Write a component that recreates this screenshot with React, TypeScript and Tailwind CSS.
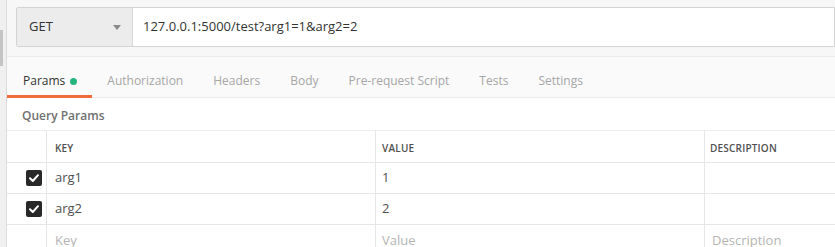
const tabs = [
  "Authorization",
  "Headers",
  "Body",
  "Pre-request Script",
  "Tests",
  "Settings",
];

const rows = [
  { key: "arg1", value: "1" },
  { key: "arg2", value: "2" },
];

const Check = () => (
  <span className="w-[16px] h-[16px] rounded-[2px] bg-[#282828] flex items-center justify-center">
    <svg width="12" height="12" viewBox="0 0 12 12">
      <path
        d="M2 6.3 L4.8 9 L10 3.2"
        fill="none"
        stroke="#fff"
        strokeWidth="2"
        strokeLinecap="round"
        strokeLinejoin="round"
      />
    </svg>
  </span>
);

const App = () => {
  return (
    <div
      className="w-[835px] h-[247px] overflow-hidden flex bg-[#f0f0f0] text-[#505050]"
      style={{ fontFamily: '"Open Sans", sans-serif' }}
    >
      <div className="w-[7px] shrink-0 flex flex-col pt-[30px] border-r border-[#dcdcdc]">
        <div className="w-[3px] h-[36px] bg-[#c4c4c4]" />
      </div>
      <div className="flex-1 flex flex-col bg-[#fafafa]">
        <div className="shrink-0 pl-[9px] pt-[7px] pb-[9px] bg-[#f7f7f7]">
          <div className="flex h-[40px] border border-[#d4d4d4] rounded-l-[2px]">
            <div className="w-[116px] bg-[#ececec] flex items-center justify-between pl-[12px] pr-[11px] border-r border-[#d8d8d8]">
              <span className="text-[13px] text-[#333]">GET</span>
              <svg width="8" height="5" viewBox="0 0 8 5">
                <path d="M0 0 H8 L4 5 Z" fill="#8a8a8a" />
              </svg>
            </div>
            <div className="flex-1 bg-white flex items-center pl-[10px] text-[13px] text-[#333]">
              127.0.0.1:5000/test?arg1=1&amp;arg2=2
            </div>
          </div>
        </div>
        <div className="shrink-0 flex h-[42px] border-t border-b border-[#ececec] items-stretch">
          <div className="relative flex items-center pt-[8px] pl-[16px] pr-[15px] text-[12px] text-[#333]">
            Params
            <span className="ml-[5px] mt-[1px] w-[7px] h-[7px] rounded-full bg-[#26b47f]" />
            <span className="absolute left-0 right-0 bottom-[-1px] h-[3px] bg-[#f26b3a]" />
          </div>
          {tabs.map((t) => (
            <div
              key={t}
              className="flex items-center pt-[8px] px-[15px] text-[12px] text-[#a6a6a6]"
            >
              {t}
            </div>
          ))}
        </div>
        <div className="shrink-0 bg-[#fff] flex-1">
          <div className="h-[32px] flex items-center pt-[4px] pl-[15px] text-[12px] font-semibold text-[#707070]">
            Query Params
          </div>
          <div className="border-t border-[#ececec]">
            <div className="flex h-[32px] border-b border-[#e6e6e6] text-[10px] font-semibold text-[#505050] tracking-[0.2px]">
              <div className="w-[40px] border-r border-[#e6e6e6]" />
              <div className="w-[329px] flex items-center pt-[3px] pl-[8px] border-r border-[#e6e6e6]">
                KEY
              </div>
              <div className="w-[329px] flex items-center pt-[3px] pl-[6px] border-r border-[#e6e6e6]">
                VALUE
              </div>
              <div className="flex-1 flex items-center pt-[3px] pl-[5px]">DESCRIPTION</div>
            </div>
            {rows.map((r) => (
              <div
                key={r.key}
                className="flex h-[31px] border-b border-[#e6e6e6] text-[13px] text-[#505050]"
              >
                <div className="w-[40px] flex items-center justify-end pr-[4px] border-r border-[#e6e6e6]">
                  <Check />
                </div>
                <div className="w-[329px] flex items-center pl-[8px] border-r border-[#e6e6e6]">
                  {r.key}
                </div>
                <div className="w-[329px] flex items-center pl-[6px] border-r border-[#e6e6e6]">
                  {r.value}
                </div>
                <div className="flex-1" />
              </div>
            ))}
            <div className="flex h-[31px] text-[13px] text-[#b4b4b4]">
              <div className="w-[40px] border-r border-[#e6e6e6]" />
              <div className="w-[329px] flex items-center pl-[8px] border-r border-[#e6e6e6]">
                Key
              </div>
              <div className="w-[329px] flex items-center pl-[6px] border-r border-[#e6e6e6]">
                Value
              </div>
              <div className="flex-1 flex items-center pl-[7px]">Description</div>
            </div>
          </div>
        </div>
      </div>
    </div>
  );
};

export default App;
